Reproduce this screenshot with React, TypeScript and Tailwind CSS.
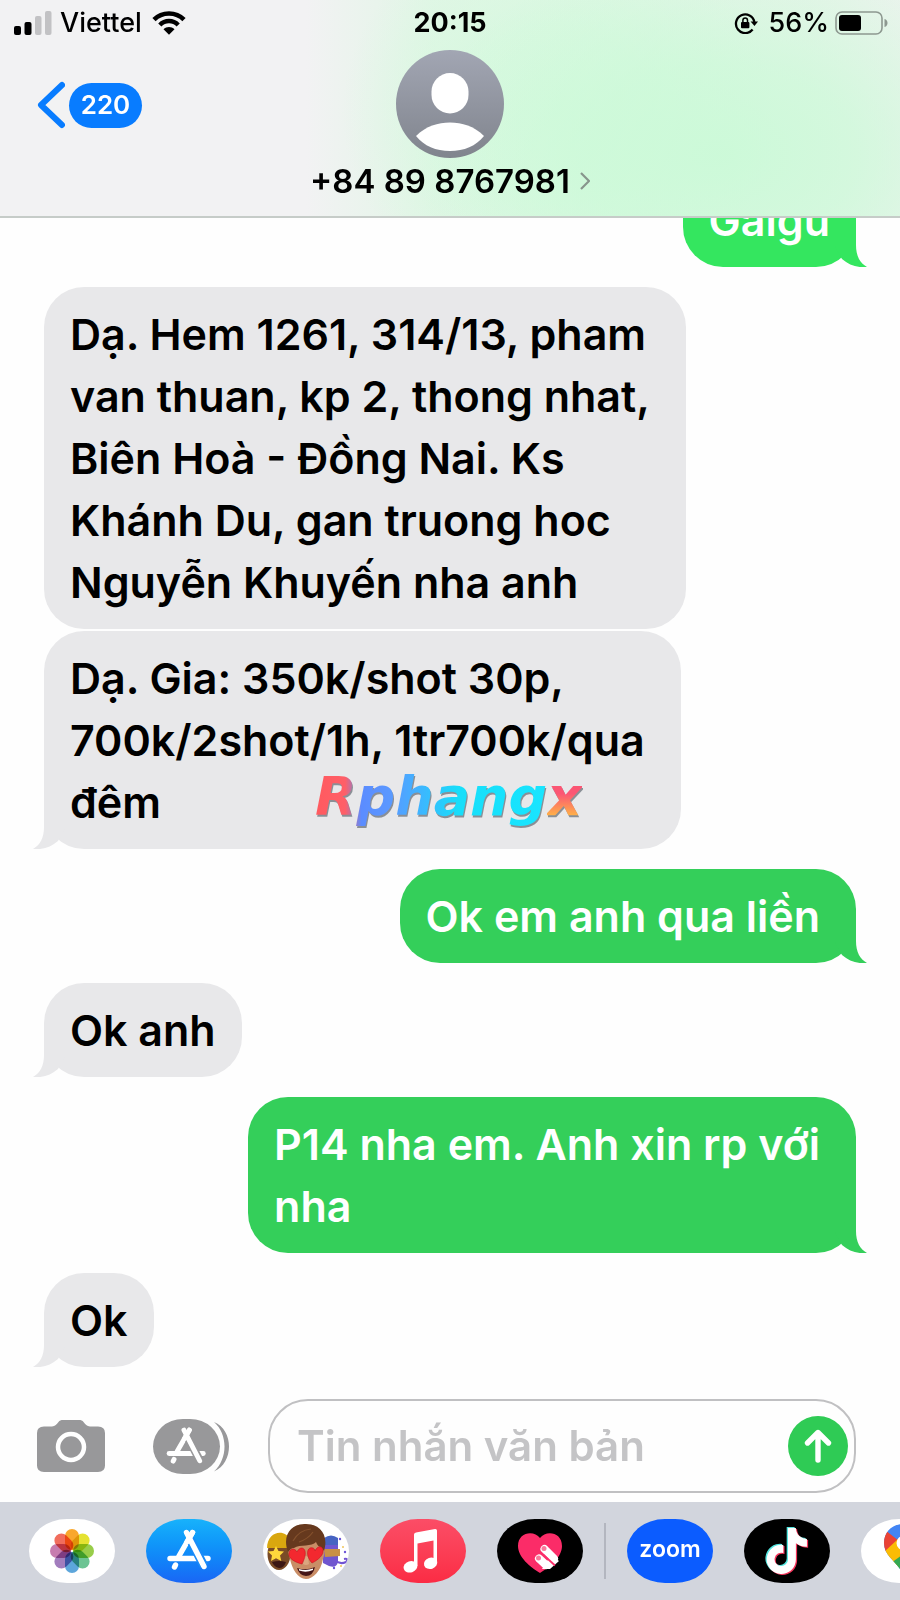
import type { ReactNode } from "react";
import { FaTiktok } from "react-icons/fa6";

type Message = {
  from: "me" | "them";
  lines: string[];
  tail: boolean;
  roomy?: boolean;
  tone?: string;
  mark?: boolean;
};

const messages: Message[] = [
  { from: "me", lines: ["Gaigu"], tail: true, tone: "bright" },
  {
    from: "them",
    lines: [
      "Dạ. Hem 1261, 314/13, pham",
      "van thuan, kp 2, thong nhat,",
      "Biên Hoà - Đồng Nai. Ks",
      "Khánh Du, gan truong hoc",
      "Nguyễn Khuyến nha anh",
    ],
    tail: false,
    roomy: true,
  },
  {
    from: "them",
    lines: ["Dạ. Gia: 350k/shot 30p,", "700k/2shot/1h, 1tr700k/qua", "đêm"],
    tail: true,
    roomy: true,
    mark: true,
  },
  { from: "me", lines: ["Ok em anh qua liền"], tail: true, roomy: true },
  { from: "them", lines: ["Ok anh"], tail: true },
  { from: "me", lines: ["P14 nha em. Anh xin rp với", "nha"], tail: true, roomy: true },
  { from: "them", lines: ["Ok"], tail: true },
];

function Tail({ mine, bright }: { mine: boolean; bright: boolean }) {
  const place = mine ? "-right-[11px]" : "-left-[11px] -scale-x-100";
  const color = !mine ? "text-[#e8e8ea]" : bright ? "text-[#34e65f]" : "text-[#34cf5a]";
  return (
    <svg className={`absolute bottom-0 h-10 w-8 ${place} ${color}`} viewBox="0 0 32 40" aria-hidden="true">
      <path fill="currentColor" d="M0 20 L18 0 H21 V18 C21 29 25 36 32 40 C22 41 14 38 7 32 Z" />
    </svg>
  );
}

function Watermark() {
  return (
    <div
      aria-hidden="true"
      className="absolute bottom-[18px] left-[271px] flex items-baseline font-['DejaVu_Sans'] text-[54px] leading-[68px] font-bold italic drop-shadow-[1px_2px_0_#8a8f96]"
    >
      <span className="bg-[linear-gradient(90deg,#ff5a5f_0%,#ff5f68_13%,#5b8cff_20%,#5b98ff_32%,#3fb4ff_45%,#17defa_62%,#19e5ff_100%)] bg-clip-text text-transparent">
        Rphang
      </span>
      <span className="bg-[linear-gradient(180deg,#fb5674_45%,#ffb347_78%)] bg-clip-text text-transparent">x</span>
    </div>
  );
}

function Bubble({ message }: { message: Message }) {
  const mine = message.from === "me";
  const bright = message.tone === "bright";
  const look = !mine
    ? "self-start bg-[#e8e8ea] text-black"
    : bright
      ? "self-end bg-[#34e65f] text-white"
      : "self-end bg-[#34cf5a] text-white";
  return (
    <li
      className={`relative shrink-0 rounded-[40px] py-4 pl-[26px] ${message.roomy ? "pr-9" : "pr-[26px]"} ${message.tail ? "mb-5" : "mb-0.5"} ${look}`}
    >
      {message.lines.map((line) => (
        <span key={line} className="block whitespace-nowrap">
          {line}
        </span>
      ))}
      {message.tail && <Tail mine={mine} bright={bright} />}
      {message.mark && <Watermark />}
    </li>
  );
}

function StatusBar() {
  return (
    <div className="grid grid-cols-[1fr_auto_1fr] items-center px-3.5 pt-1 text-[27px] leading-[38px] font-medium">
      <div className="flex items-center gap-2">
        <svg className="h-6 w-[38px]" viewBox="0 0 38 24" aria-hidden="true">
          <rect x="0" y="15" width="7" height="9" rx="2" />
          <rect x="10.500" y="11" width="7" height="13" rx="2" />
          <rect x="21" y="5" width="6.500" height="19" rx="2" fill="#c2c2c4" />
          <rect x="31" y="0" width="6.500" height="24" rx="2" fill="#c2c2c4" />
        </svg>
        <span>Viettel</span>
        <svg className="ml-0.5 h-6 w-[34px]" viewBox="0 0 34 24" aria-hidden="true">
          <g fill="none" stroke="#000" strokeWidth="4.500">
            <path d="M2 8.600 C10 0.300 24 0.300 32 8.600" />
            <path d="M7.800 14 C13 8.800 21 8.800 26.200 14" />
          </g>
          <path d="M11.500 18.200 C14.500 15.300 19.500 15.300 22.500 18.200 L17 23.800 Z" />
        </svg>
      </div>
      <span className="font-bold">20:15</span>
      <div className="-mr-0.5 flex items-center justify-end gap-1.5">
        <svg className="mr-1 h-[22px] w-6" viewBox="0 0 24 22" aria-hidden="true">
          <path d="M18.600 17.500 A9.300 9.300 0 1 1 20.400 10" fill="none" stroke="#000" strokeWidth="2.300" />
          <path d="M16.600 9.500 H24 L20.500 14 Z" />
          <rect x="7" y="10" width="8.400" height="6.300" rx="1" />
          <path d="M8.900 10.500 V8.300 a2.300 2.300 0 0 1 4.600 0 V10.500" fill="none" stroke="#000" strokeWidth="1.500" />
        </svg>
        <span>56%</span>
        <svg className="h-6 w-[53px]" viewBox="0 0 53 24" aria-hidden="true">
          <rect x="1" y="1" width="46" height="22" rx="6" fill="none" stroke="#8d9890" strokeWidth="1.600" />
          <rect x="4" y="4" width="22" height="16" rx="3" />
          <path d="M49.500 8 C53.500 9 53.500 15 49.500 16 Z" fill="#8d9890" />
        </svg>
      </div>
    </div>
  );
}

function Header() {
  return (
    <header className="shrink-0 border-b-2 border-[#c6ccc8] bg-[#f2f2f3] bg-[radial-gradient(ellipse_34%_95%_at_80%_72%,rgba(202,250,215,0.9)_0%,rgba(202,250,215,0.65)_45%,rgba(202,250,215,0)_100%),radial-gradient(ellipse_24%_90%_at_62%_52%,rgba(210,250,220,0.8)_0%,rgba(210,250,220,0.6)_45%,rgba(210,250,220,0)_100%),linear-gradient(90deg,rgba(226,245,230,0)_34%,rgba(224,246,229,0.9)_48%,rgba(226,245,230,0.8)_90%,rgba(226,245,230,0.5)_100%)]">
      <StatusBar />
      <div className="grid grid-cols-[1fr_auto_1fr] items-start px-9 pt-2 pb-3.5">
        <button type="button" aria-label="Quay lại, 220 tin nhắn" className="mt-[31px] flex items-center gap-1 justify-self-start">
          <svg className="h-12 w-[29px]" viewBox="0 0 29 48" aria-hidden="true">
            <path d="M26 4 L5 24 L26 44" fill="none" stroke="#087cff" strokeWidth="6" strokeLinecap="round" strokeLinejoin="round" />
          </svg>
          <span className="flex h-[45px] w-[73px] items-center justify-center rounded-full bg-[#087cff] text-[26px] leading-8 font-semibold text-white">
            220
          </span>
        </button>
        <button type="button" className="flex flex-col items-center">
          <svg className="size-[108px]" viewBox="0 0 108 108" aria-hidden="true">
            <defs>
              <linearGradient id="avatar" x1="0" y1="0" x2="0" y2="1">
                <stop offset="0" stopColor="#a2a6b3" />
                <stop offset="1" stopColor="#80848d" />
              </linearGradient>
            </defs>
            <circle cx="54" cy="54" r="54" fill="url(#avatar)" />
            <rect x="35.500" y="23" width="37" height="40.500" rx="18.500" fill="#fff" />
            <path d="M20 86 C30 76 42 72.500 54 72.500 S78 76 88 86 C80 96 68 101 54 101 S28 96 20 86 Z" fill="#fff" />
          </svg>
          <span className="flex items-center gap-2.5 pt-0.5 text-[33px] leading-[42px] font-semibold">
            +84 89 8767981
            <svg className="h-[18px] w-2.5" viewBox="0 0 10 18" aria-hidden="true">
              <path d="M1 1 L9 9 L1 17" fill="none" stroke="#87958c" strokeWidth="2.200" />
            </svg>
          </span>
        </button>
      </div>
    </header>
  );
}

function StoreMark({ cut }: { cut: string }) {
  return (
    <g fill="none" stroke="#fff" strokeWidth="5.400" strokeLinecap="round">
      <path d="M24 39.500 H62" />
      <path d="M46.500 13.500 L33 37" />
      <path d="M44 20 L58 47" stroke={cut} strokeWidth="9" strokeLinecap="butt" />
      <path d="M46.500 13.500 L41 23" />
      <path d="M40.500 13.500 L58 47.500" />
      <path d="M29.500 46 L28.500 48" />
    </g>
  );
}

function Composer() {
  return (
    <form className="flex shrink-0 items-center pr-11 pb-[9px] pl-[37px]" onSubmit={(e) => e.preventDefault()}>
      <button type="button" aria-label="Máy ảnh">
        <svg className="h-[54px] w-[68px]" viewBox="0 0 68 54" aria-hidden="true">
          <path
            fill="#98989a"
            d="M7 7.500 H15 C18 7.500 20 5 21.500 3 C22.500 1.500 24 1 26 1 H42 C44 1 45.500 1.500 46.500 3 C48 5 50 7.500 53 7.500 H61 Q68 7.500 68 14 V46.500 Q68 53 61 53 H7 Q0 53 0 46.500 V14 Q0 7.500 7 7.500 Z"
          />
          <circle cx="34" cy="28" r="13" fill="none" stroke="#fff" strokeWidth="4.500" />
        </svg>
      </button>
      <button type="button" aria-label="Ứng dụng" className="ml-12">
        <svg className="h-[55px] w-[76px]" viewBox="0 0 76 55" aria-hidden="true">
          <rect x="0" y="0" width="67" height="55" rx="30" ry="27.500" fill="#98989a" />
          <path d="M61 3 C81 11 81 44 61 52.500 C75 40 75 15 61 3 Z" fill="#98989a" />
          <g transform="translate(-5.500 -1) scale(.9)">
            <StoreMark cut="#98989a" />
          </g>
        </svg>
      </button>
      <div className="ml-[39px] flex h-[94px] min-w-0 flex-1 items-center rounded-[40px] border-2 border-[#c0c0c2] pr-1.5 pl-[27px]">
        <input
          type="text"
          aria-label="Tin nhắn văn bản"
          placeholder="Tin nhắn văn bản"
          className="min-w-0 flex-1 bg-transparent text-[42px] leading-[62px] font-semibold outline-none placeholder:text-[#c4c4c6]"
        />
        <button type="submit" aria-label="Gửi" className="flex size-[60px] items-center justify-center rounded-full bg-[#2fcb55]">
          <svg className="h-9 w-8" viewBox="0 0 32 36" aria-hidden="true">
            <path d="M16 32 V5 M5.500 15 L16 4.500 L26.500 15" fill="none" stroke="#fff" strokeWidth="5.400" strokeLinecap="round" strokeLinejoin="round" />
          </svg>
        </button>
      </div>
    </form>
  );
}

const petals = ["#f9a01b", "#e3e01f", "#8fc93a", "#5fbf8a", "#4f9fd8", "#9a72b8", "#c271a8", "#f0604f"];

function DockApp({ label, look, children }: { label: string; look: string; children: ReactNode }) {
  return (
    <button type="button" aria-label={label} className={`flex h-16 w-[86px] shrink-0 items-center justify-center overflow-hidden rounded-[38px/32px] ${look}`}>
      {children}
    </button>
  );
}

function Memoji() {
  return (
    <svg className="h-16 w-[86px]" viewBox="0 0 86 64" aria-hidden="true">
      <ellipse cx="16" cy="35" rx="11.500" ry="16" fill="#7a4b26" />
      <path d="M4 30 C4 10 24 11 26 20 V29 H4 Z" fill="#d9a70f" />
      <path d="M13 27 l2.500 5 5.500 .5 -4 4 1.300 5.500 -5.300 -2.700 -5 2.700 1 -5.500 -4 -4 5.500 -.5 Z" fill="#ffd83c" />
      <path d="M9 43 Q16 41 23 43 Q21 49 16 49 Q11 48 9 43 Z" fill="#3c1713" />
      <path d="M60 21 Q68 14 75 21 V42 Q74 50 66 47 L60 44 Z" fill="#6f55cf" />
      <path d="M61 19 Q68 14 75 19 V26 H61 Z" fill="#4663c2" />
      <path d="M61 30 H77 V37 L62 38 Z" fill="#c99045" />
      <path d="M71 41 Q77 46 83 43 Q86 39 81 40" fill="none" stroke="#7153d3" strokeWidth="2" />
      <g fill="#6d55d9">
        <circle cx="77" cy="20" r="1.200" />
        <circle cx="82" cy="33" r="1.200" />
        <circle cx="71" cy="49" r="1.200" />
      </g>
      <circle cx="80" cy="28" r="1" fill="#efc55b" />
      <circle cx="78" cy="47" r="1" fill="#efc55b" />
      <path d="M26 26 Q43 9 60 26 Q63 31 60 40 C58 52 50 60 43 60 C35 60 29 50 27 40 Q24 32 26 26 Z" fill="#c98d66" />
      <path d="M41 38 Q43 36 45 38 L46 45 Q43 47 40 45 Z" fill="#dba67f" />
      <path d="M34 49 Q43 52 52 48 Q50 57 43 57 Q36 56 34 49 Z" fill="#451516" />
      <path d="M36 50 Q43 52 50 49.500 V51 Q43 54 36 51.500 Z" fill="#fff" />
      <path d="M25 33 C18 14 31 4 43 5 C57 5 66 16 61 32 L58 28 C56 28 54 26 53 23 C49 28 37 25 31 29 C28 29 27 31 25 33 Z" fill="#66391e" />
      <path d="M30 22 Q36 11 48 10 M36 23 Q45 20 50 13" fill="none" stroke="#84512d" strokeWidth="1.200" />
      <g fill="#f3282f" stroke="#c91422" strokeWidth=".6">
        <path d="M39 45 C31 43 25 39 26 34 C27 29 32 29 34 33 C36 28 41 28 42 32 C43 36 41 41 39 45 Z" />
        <path d="M49 44 C44 39 43 31 47 29 C50 28 52 30 52 32 C54 27 59 26 60 31 C61 36 55 41 49 44 Z" />
      </g>
    </svg>
  );
}

function Dock() {
  return (
    <nav aria-label="Ứng dụng iMessage" className="flex shrink-0 items-center gap-[31px] overflow-hidden bg-[#d2d5dd] py-[17px] pl-[29px]">
      <DockApp label="Ảnh" look="bg-white">
        <svg className="size-[46px]" viewBox="-23 -23 46 46" aria-hidden="true">
          {petals.map((color, i) => (
            <rect
              key={color}
              x="-7"
              y="-22"
              width="14"
              height="21"
              rx="7"
              fill={color}
              opacity=".92"
              transform={`rotate(${i * 45})`}
              className="mix-blend-multiply"
            />
          ))}
        </svg>
      </DockApp>
      <DockApp label="App Store" look="bg-linear-to-b from-[#18b2fb] to-[#1a66f5]">
        <svg className="h-16 w-[86px]" viewBox="0 0 86 64" aria-hidden="true">
          <StoreMark cut="#1b8bf8" />
        </svg>
      </DockApp>
      <DockApp label="Memoji" look="bg-white">
        <Memoji />
      </DockApp>
      <DockApp label="Nhạc" look="bg-linear-to-b from-[#fb4d66] to-[#fb2b44]">
        <svg className="h-16 w-[86px]" viewBox="0 0 86 64" aria-hidden="true">
          <g fill="#fff">
            <path d="M34 15.500 Q34 14 36 13.600 L55 10 Q57 9.800 57 11.500 V43 H53.500 V21.500 L37.500 24.500 V47 H34 Z" />
            <ellipse cx="30.500" cy="48" rx="7" ry="5.600" transform="rotate(-18 30 48)" />
            <ellipse cx="50.500" cy="44.500" rx="6.800" ry="5.600" transform="rotate(-18 50 44)" />
          </g>
        </svg>
      </DockApp>
      <div className="flex shrink-0 items-center gap-[21px]">
        <DockApp label="Digital Touch" look="bg-black">
          <svg className="h-16 w-[86px]" viewBox="0 0 86 64" aria-hidden="true">
            <path d="M43 54 C33 48 21 38 21 27 C21 13 37 11 43 19 C49 11 65 13 65 27 C65 38 53 48 43 54 Z" fill="#fb2c68" />
            <g stroke="#fff" strokeWidth="8" strokeLinecap="round">
              <path d="M47.500 30 L57 39.500" />
              <path d="M42 39.500 L49 46" />
            </g>
            <path d="M54 36 L62 42 L53 50 L45 50 Z" fill="#fff" />
            <path d="M46 35.500 L58 46.500" stroke="#fb2c68" strokeWidth="1.800" />
            <path d="M66 37 C62 46 54 52 44 56 V60 H72 V37 Z" fill="#000" />
            <circle cx="47" cy="29.500" r="2.500" fill="#f97a9c" />
            <circle cx="41.500" cy="39" r="2.500" fill="#f97a9c" />
          </svg>
        </DockApp>
        <div className="h-14 w-0.5 bg-[#b3b6bf]" />
        <DockApp label="Zoom" look="bg-[#0b5cff]">
          <span className="pb-1 text-[23px] leading-8 font-semibold text-white">zoom</span>
        </DockApp>
      </div>
      <DockApp label="TikTok" look="bg-black">
        <svg className="h-16 w-[86px]" viewBox="0 0 86 64" aria-hidden="true">
          <FaTiktok size={46} x="18.500" y="8" color="#54e6e0" />
          <FaTiktok size={46} x="21" y="10" color="#f5365c" />
          <FaTiktok size={46} x="19.800" y="9" color="#fff" />
        </svg>
      </DockApp>
      <DockApp label="Google Maps" look="bg-white">
        <svg className="h-16 w-[86px]" viewBox="0 0 86 64" aria-hidden="true">
          <defs>
            <clipPath id="pin">
              <path d="M43 5 C55 5 63 13 63 24 C63 39 47 43 43 59 C39 43 23 39 23 24 C23 13 31 5 43 5 Z" />
            </clipPath>
          </defs>
          <g clipPath="url(#pin)">
            <rect width="86" height="64" fill="#4285f4" />
            <path d="M10 20 L24 11 L38 22 L22 36 Z" fill="#ea4335" />
            <path d="M22 34 L37 20 L64 10 V40 L32 50 Z" fill="#fbbc04" />
            <path d="M30 44 L60 22 V64 H30 Z" fill="#34a853" />
          </g>
          <circle cx="43" cy="24" r="7.500" fill="#fff" />
        </svg>
      </DockApp>
    </nav>
  );
}

export default function App() {
  return (
    <div className="flex h-screen flex-col overflow-hidden bg-[#fefefe] font-['Inter','Noto_Sans',sans-serif] text-black">
      <Header />
      <main className="flex min-h-0 flex-1 flex-col justify-end overflow-hidden pb-3">
        <ol className="flex flex-col px-11 text-[43px] leading-[62px] font-semibold">
          {messages.map((message) => (
            <Bubble key={message.lines[0]} message={message} />
          ))}
        </ol>
      </main>
      <Composer />
      <Dock />
    </div>
  );
}
